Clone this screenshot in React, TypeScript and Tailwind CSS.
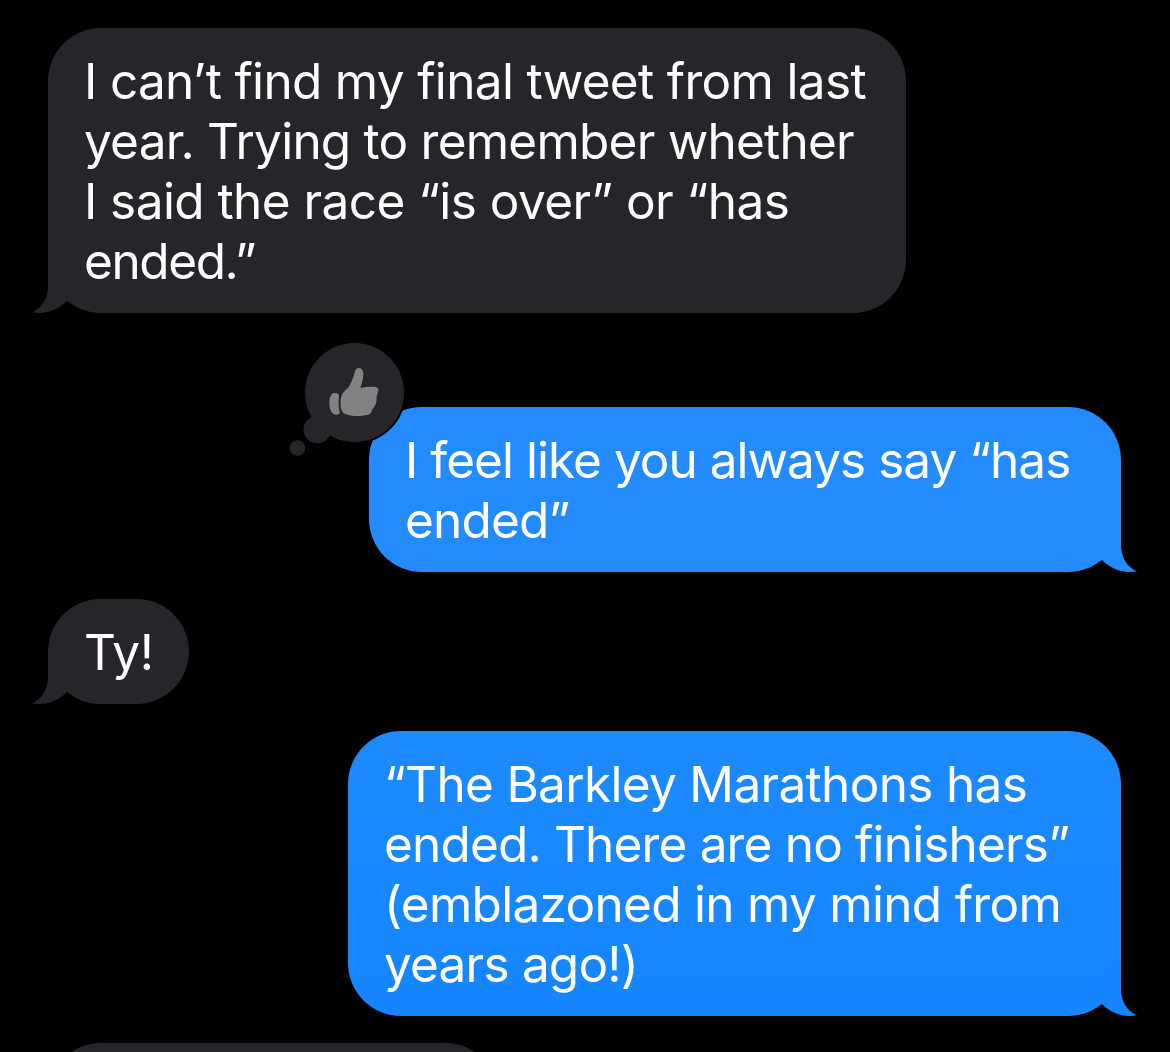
import clsx from "clsx";

type Line = { text: string; className?: string };

type BubbleProps = {
  lines: Line[];
  sent?: boolean;
  className?: string;
  children?: React.ReactNode;
};

const Tail = ({ sent }: { sent?: boolean }) => (
  <svg
    viewBox="0 0 50 60"
    className={clsx(
      "absolute bottom-0 w-[50px] h-[60px]",
      sent ? "-right-4 -scale-x-100" : "-left-4"
    )}
    fill="currentColor"
  >
    <path d="M16 5V33C16 46 9 56 0 59.2C14 62 27 56.5 35 48L46 30Z" />
  </svg>
);

const Bubble = ({ lines, sent, className, children }: BubbleProps) => (
  <div className={clsx("relative shrink-0 rounded-[53px] px-9 py-[22.5px]", className)}>
    <Tail sent={sent} />
    {children}
    <p className="relative text-[49.5px] leading-[60px] text-white whitespace-nowrap">
      {lines.map((line) => (
        <span key={line.text} className={clsx("block", line.className)}>
          {line.text}
        </span>
      ))}
    </p>
  </div>
);

const LikeReaction = () => (
  <svg viewBox="0 0 450 420" className="absolute -left-[89px] -top-[77px] w-[150px] h-[140px]">
    <circle cx="223.5" cy="187.5" r="154" fill="#000" />
    <g fill="#26252a">
      <circle cx="223.5" cy="187.5" r="148.5" />
      <circle cx="112" cy="298.5" r="41.5" />
      <circle cx="52.5" cy="354" r="23" />
    </g>
    <g fill="#828282">
      <path d="M236 114C230 114 227 118 225 124C220 145 212 163 204 174C190 185 183 195 182 213C181 228 182 240 190 249C202 257 220 258 235 258C250 258 266 256 272 250C276 247 274 243 277 238C287 228 291 215 290 200C290 194 295 188 295 180C295 172 290 170 280 170C265 170 253 171 241 174C246 160 250 145 250 130C249 120 245 114 236 114Z" />
      <path d="M165 189C151 189 148 204 148 221C148 239 156 254 170 254C178 254 180 250 179 247C175 232 175 215 177 199C178 193 174 189 165 189Z" />
    </g>
  </svg>
);

const App = () => {
  return (
    <main className="flex flex-col h-[1052px] w-[1170px] overflow-hidden bg-black pl-12 pr-[49px] pt-7 font-['Inter',sans-serif]">
      <Bubble
        className="self-start w-[858px] bg-[#26252a] text-[#26252a]"
        lines={[
          { text: "I can’t find my final tweet from last", className: "tracking-[-0.67px]" },
          { text: "year. Trying to remember whether", className: "tracking-[-0.77px]" },
          { text: "I said the race “is over” or “has", className: "tracking-[-0.56px]" },
          { text: "ended.”", className: "tracking-[-1.4px]" },
        ]}
      />
      <Bubble
        sent
        className="self-end mt-[94px] w-[752px] bg-[#248bff] text-[#248bff]"
        lines={[
          { text: "I feel like you always say “has", className: "tracking-[-0.97px]" },
          { text: "ended”", className: "tracking-[-0.8px]" },
        ]}
      >
        <LikeReaction />
      </Bubble>
      <Bubble
        className="self-start mt-[27px] w-[141px] bg-[#26252a] text-[#26252a]"
        lines={[{ text: "Ty!", className: "tracking-[-0.5px]" }]}
      />
      <Bubble
        sent
        className="self-end mt-[27px] w-[773px] bg-linear-to-b from-[#1d8aff] to-[#1586ff] text-[#1586ff]"
        lines={[
          { text: "“The Barkley Marathons has", className: "tracking-[-0.68px]" },
          { text: "ended. There are no finishers”", className: "tracking-[-0.83px]" },
          { text: "(emblazoned in my mind from", className: "tracking-[-0.7px]" },
          { text: "years ago!)", className: "tracking-[-0.8px]" },
        ]}
      />
      <div className="self-start shrink-0 mt-[27px] w-[450px] h-[105px] rounded-[53px] bg-[#26252a]" />
    </main>
  );
};

export default App;
